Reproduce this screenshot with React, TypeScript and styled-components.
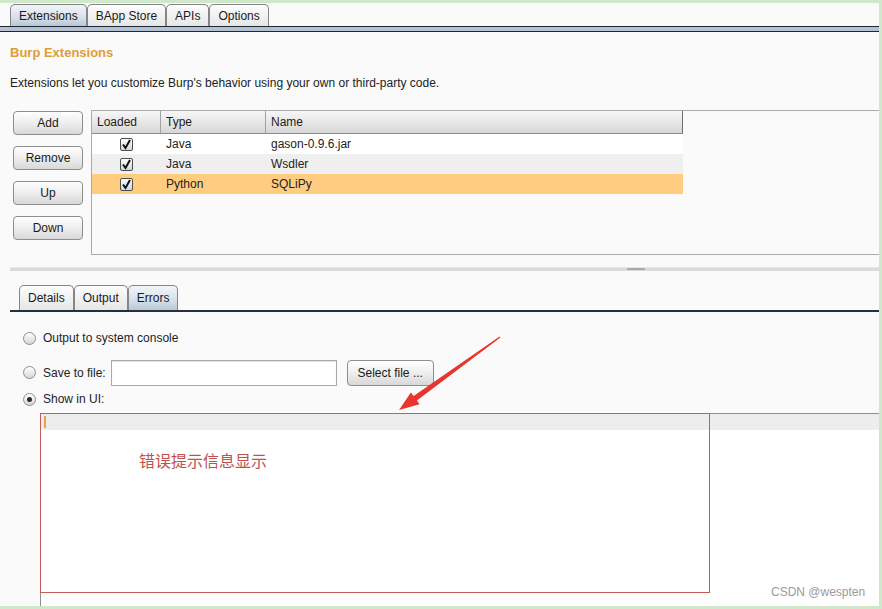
import React from 'react'
import styled, { createGlobalStyle } from 'styled-components'

const GlobalStyle = createGlobalStyle`
  html, body {
    margin: 0;
    padding: 0;
    background: #fafafa;
  }
  body {
    font-family: 'Liberation Sans', Arial, sans-serif;
    font-size: 12px;
    color: #222;
  }
`

const Frame = styled.div`
  position: relative;
  width: 882px;
  height: 609px;
  box-sizing: border-box;
  border-top: 3px solid #cfe8c9;
  border-right: 3px solid #cfe8c9;
  border-bottom: 3px solid #cfe8c9;
  background: #fafafa;
  display: flex;
  flex-direction: column;
  overflow: hidden;
`

const TabStrip = styled.div<{ $inset: number; $top: number }>`
  display: flex;
  align-items: flex-end;
  padding-left: ${({ $inset }) => $inset}px;
  margin-top: ${({ $top }) => $top}px;
`

const Tab = styled.div<{ $active?: boolean; $height: number }>`
  height: ${({ $height }) => $height}px;
  box-sizing: border-box;
  padding: 0 8px;
  display: flex;
  align-items: center;
  border: 1px solid #858585;
  border-bottom: none;
  border-radius: 5px 5px 0 0;
  color: #1a1a1a;
  background: ${({ $active }) =>
    $active ? 'linear-gradient(#f1f5f9, #d6e0ea 60%, #b8c6d6)' : 'linear-gradient(#fdfdfd, #e6e6e6)'};
`

const TopBand = styled.div`
  height: 6px;
  box-sizing: border-box;
  border-top: 1px solid #1d2836;
  border-bottom: 1px solid #1d2836;
  background: #b5c1d1;
`

const Heading = styled.div`
  margin: 13px 0 0 10px;
  font-size: 13px;
  line-height: 16px;
  font-weight: bold;
  color: #df9c37;
`

const Description = styled.div`
  margin: 15px 0 0 10px;
  line-height: 14px;
`

const MainRow = styled.div`
  margin-top: 20px;
  padding-left: 13px;
  height: 145px;
  display: flex;
  gap: 8px;
`

const ButtonColumn = styled.div`
  display: flex;
  flex-direction: column;
  gap: 11px;
  padding-top: 1px;
`

const Button = styled.div<{ $width?: number; $height?: number }>`
  width: ${({ $width }) => $width ?? 70}px;
  height: ${({ $height }) => $height ?? 24}px;
  box-sizing: border-box;
  border: 1px solid #8d8d8d;
  border-radius: 4px;
  background: linear-gradient(#fefefe, #f0f0f0 45%, #d8d8d8);
  box-shadow: inset 0 1px 0 #fff;
  display: flex;
  align-items: center;
  justify-content: center;
  color: #1a1a1a;
`

const Pane = styled.div`
  flex: 1;
  border: 1px solid #aaaab0;
  border-right: none;
  background: #fafafa;
`

const Grid = styled.div`
  display: grid;
  grid-template-columns: 69px 105px 417px;
  width: 591px;
`

const HeaderCell = styled.div<{ $last?: boolean }>`
  height: 23px;
  box-sizing: border-box;
  padding-left: 5px;
  display: flex;
  align-items: center;
  background: linear-gradient(#f7f7f7, #e6e6e6 55%, #d6d6d8);
  border-right: 1px solid ${({ $last }) => ($last ? '#6e6e6e' : '#a2a2a2')};
  border-bottom: 1px solid #8c8c8c;
`

const Cell = styled.div<{ $bg: string; $center?: boolean }>`
  height: 20px;
  padding-left: ${({ $center }) => ($center ? 0 : 5)}px;
  display: flex;
  align-items: center;
  justify-content: ${({ $center }) => ($center ? 'center' : 'flex-start')};
  background: ${({ $bg }) => $bg};
`

const CheckBox = styled.div`
  width: 13px;
  height: 13px;
  box-sizing: border-box;
  border: 1px solid #4d4d4d;
  border-radius: 2px;
  background: linear-gradient(#fdfdfd, #cfd7df);
  display: flex;
  align-items: center;
  justify-content: center;
`

const Splitter = styled.div`
  margin: 12px 0 0 10px;
  height: 4px;
  background: #dadadd;
  border-top: 1px solid #e6e6e8;
  box-sizing: border-box;
  padding-left: 617px;
`

const Grip = styled.div`
  width: 18px;
  height: 2px;
  background: #a9a9ab;
`

const TabLine = styled.div`
  margin-left: 10px;
  height: 2px;
  background: #25303d;
`

const RadioList = styled.div`
  padding-left: 23px;
  display: flex;
  flex-direction: column;
`

const RadioRow = styled.div<{ $top: number; $height: number }>`
  margin-top: ${({ $top }) => $top}px;
  height: ${({ $height }) => $height}px;
  display: flex;
  align-items: center;
`

const Radio = styled.div<{ $checked?: boolean }>`
  width: 13px;
  height: 13px;
  box-sizing: border-box;
  margin-right: 7px;
  border: 1px solid #8e8e8e;
  border-radius: 50%;
  background: linear-gradient(#ffffff, #d6d6d6);
  display: flex;
  align-items: center;
  justify-content: center;
  &::after {
    content: '';
    display: ${({ $checked }) => ($checked ? 'block' : 'none')};
    width: 5px;
    height: 5px;
    border-radius: 50%;
    background: #2b2b2b;
  }
`

const TextField = styled.div`
  width: 226px;
  height: 26px;
  box-sizing: border-box;
  margin: 0 10px 0 5px;
  border: 1px solid #a9a9a9;
  background: #fff;
  box-shadow: inset 0 1px 1px #e0e0e0;
`

const OutputArea = styled.div`
  flex: 1;
  margin: 4px 0 0 40px;
  border-top: 1px solid #8f8f8f;
  border-left: 1px solid #8f8f8f;
  background: #fff;
`

const CaretLine = styled.div`
  height: 16px;
  background: #ededed;
  padding: 2px 0 0 3px;
  box-sizing: border-box;
`

const Caret = styled.div`
  width: 2px;
  height: 12px;
  background: #e6a04a;
`

const Annotation = styled.div`
  position: absolute;
  left: 40px;
  top: 410px;
  width: 670px;
  height: 180px;
  box-sizing: border-box;
  border: 1px solid #c95a5a;
  padding: 38px 0 0 98px;
  color: #c4504e;
  font-family: 'Liberation Sans', 'Noto Sans CJK SC', sans-serif;
  font-size: 16px;
  line-height: 20px;
`

const ArrowSvg = styled.svg`
  position: absolute;
  left: 390px;
  top: 322px;
  width: 120px;
  height: 90px;
`

const Watermark = styled.div`
  position: absolute;
  left: 771px;
  top: 582px;
  color: #9a9a9a;
  font-size: 12px;
  line-height: 14px;
`

const rows = [
  { type: 'Java', name: 'gason-0.9.6.jar', bg: '#ffffff' },
  { type: 'Java', name: 'Wsdler', bg: '#efefef' },
  { type: 'Python', name: 'SQLiPy', bg: '#ffcc80' },
]

const Check = () => (
  <CheckBox>
    <svg width="11" height="11" viewBox="0 0 11 11">
      <path d="M2 5.5 L4.5 9 L9 1" fill="none" stroke="#111" strokeWidth="2" />
    </svg>
  </CheckBox>
)

export default function App() {
  return (
    <>
      <GlobalStyle />
      <Frame>
        <TabStrip $inset={10} $top={1}>
          <Tab $active $height={22}>Extensions</Tab>
          <Tab $height={22}>BApp Store</Tab>
          <Tab $height={22}>APIs</Tab>
          <Tab $height={22}>Options</Tab>
        </TabStrip>
        <TopBand />

        <Heading>Burp Extensions</Heading>
        <Description>Extensions let you customize Burp's behavior using your own or third-party code.</Description>

        <MainRow>
          <ButtonColumn>
            <Button>Add</Button>
            <Button>Remove</Button>
            <Button>Up</Button>
            <Button>Down</Button>
          </ButtonColumn>
          <Pane>
            <Grid>
              <HeaderCell>Loaded</HeaderCell>
              <HeaderCell>Type</HeaderCell>
              <HeaderCell $last>Name</HeaderCell>
              {rows.map((r) => (
                <React.Fragment key={r.name}>
                  <Cell $bg={r.bg} $center>
                    <Check />
                  </Cell>
                  <Cell $bg={r.bg}>{r.type}</Cell>
                  <Cell $bg={r.bg}>{r.name}</Cell>
                </React.Fragment>
              ))}
            </Grid>
          </Pane>
        </MainRow>

        <Splitter>
          <Grip />
        </Splitter>

        <TabStrip $inset={19} $top={14}>
          <Tab $height={25}>Details</Tab>
          <Tab $height={25}>Output</Tab>
          <Tab $active $height={25}>Errors</Tab>
        </TabStrip>
        <TabLine />

        <RadioList>
          <RadioRow $top={16} $height={20}>
            <Radio />
            Output to system console
          </RadioRow>
          <RadioRow $top={11} $height={27}>
            <Radio />
            Save to file:
            <TextField />
            <Button $width={87} $height={26}>Select file ...</Button>
          </RadioRow>
          <RadioRow $top={3} $height={20}>
            <Radio $checked />
            Show in UI:
          </RadioRow>
        </RadioList>

        <OutputArea>
          <CaretLine>
            <Caret />
          </CaretLine>
        </OutputArea>

        <Annotation>错误提示信息显示</Annotation>
        <ArrowSvg viewBox="390 322 120 90">
          <polygon
            points="500.4,334.5 416.9,397.4 419.6,401.2 399,407 410.9,389.4 413.6,393.1 499.6,333.5"
            fill="#e8362e"
          />
        </ArrowSvg>
        <Watermark>CSDN @wespten</Watermark>
      </Frame>
    </>
  )
}
